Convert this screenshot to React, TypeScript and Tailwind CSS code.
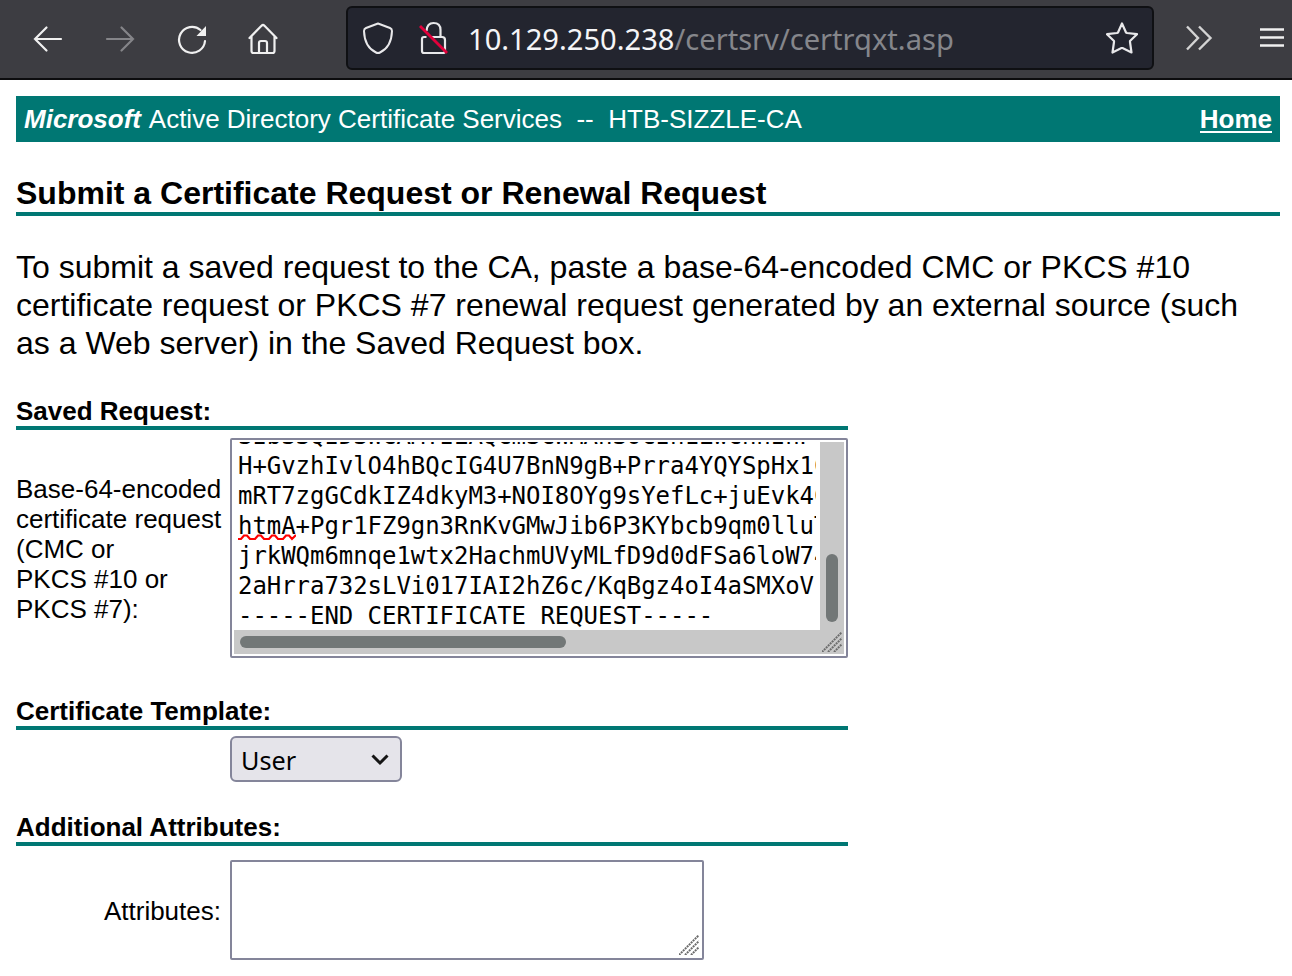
import React from 'react';

const requestLines = [
  'SIbSSQIDSWCAMTIEAQCmSCWMAnSOCIn1LwCnnInP',
  'H+GvzhIvlO4hBQcIG4U7BnN9gB+Prra4YQYSpHx1C',
  'mRT7zgGCdkIZ4dkyM3+NOI8OYg9sYefLc+juEvk4C',
  'htmA+Pgr1FZ9gn3RnKvGMwJib6P3KYbcb9qm0lluT',
  'jrkWQm6mnqe1wtx2HachmUVyMLfD9d0dFSa6loW74',
  '2aHrra732sLVi017IAI2hZ6c/KqBgz4oI4aSMXoV',
  '-----END CERTIFICATE REQUEST-----',
];

function Grip() {
  return (
    <svg width="20" height="20" viewBox="0 0 20 20" fill="none" stroke="#6b6b6b" strokeWidth="2" strokeDasharray="2 0.8">
      <path d="M0 20L20 0M6 20L20 6M12 20L20 12" />
    </svg>
  );
}

function Heading({ children }: { children: React.ReactNode }) {
  return <h2 className="h-[34px] w-[832px] border-b-4 border-[#007773] text-[26px] leading-[30px] font-bold whitespace-nowrap">{children}</h2>;
}

function Toolbar() {
  return (
    <header className="flex h-20 items-start border-b-2 border-[#0c0c0e] bg-[#3d3d42]">
      <div className="flex h-[78px] w-[346px] shrink-0 items-center text-[#f0f0f0]">
        <svg className="ml-8" width="32" height="32" viewBox="0 0 32 32" fill="none" stroke="currentColor" strokeWidth="2.2" strokeLinecap="round">
          <path d="M3 16H29M14.5 4.5L3 16L14.5 27.5" />
        </svg>
        <svg className="ml-10 text-[#858589]" width="32" height="32" viewBox="0 0 32 32" fill="none" stroke="currentColor" strokeWidth="2.2" strokeLinecap="round">
          <path d="M3 16H29M17.5 4.5L29 16L17.5 27.5" />
        </svg>
        <svg className="ml-10" width="32" height="32" viewBox="0 0 32 32" fill="none" stroke="currentColor" strokeWidth="2.2" strokeLinecap="round">
          <path d="M29 18A13 13 0 1 1 24.5 7" />
          <path d="M30 3V13H20.5Z" fill="currentColor" stroke="none" />
        </svg>
        <svg className="ml-[39px]" width="32" height="32" viewBox="0 0 32 32" fill="none" stroke="currentColor" strokeWidth="2.2" strokeLinecap="round" strokeLinejoin="round">
          <path d="M2.5 15L14.5 2.7Q16 1.3 17.5 2.7L29.5 15M4.500 13V28Q4.500 30 6.500 30H25.500Q27.500 30 27.500 28V13M12 30V20Q12 18 14 18H18Q20 18 20 20V30" />
        </svg>
      </div>
      <div className="mt-1.5 flex h-16 w-[808px] shrink-0 items-center rounded-md border-2 border-[#0f1013] bg-[#23252f] text-[#e8e8ea]">
        <svg className="ml-3.5" width="32" height="32" viewBox="0 0 32 32" fill="none" stroke="currentColor" strokeWidth="2" strokeLinejoin="round">
          <path d="M16 1.5L28 6Q30 6.8 30 9Q29.500 25 18 30.500Q16 31.500 14 30.500Q2.500 25 2 9Q2 6.800 4 6Z" />
        </svg>
        <svg className="ml-6" width="32" height="34" viewBox="0 0 32 34" fill="none" stroke="currentColor" strokeWidth="2.200">
          <path d="M8.500 10Q9 2 15.500 2Q22.500 2 22.500 9V16M12 16H24Q27 16 27 19V30Q27 32 25 32H6Q4 32 4 30V18Q4 16 6 16H8.500" />
          <path d="M2 5L29 32" stroke="#e2003b" strokeWidth="2.800" />
        </svg>
        <p className="mt-0.5 ml-[18px] font-['Noto_Sans'] text-[29.1px] leading-10 whitespace-nowrap text-[#f5f5f7]">
          10.129.250.238<span className="text-[#85868b]">/certsrv/certrqxt.asp</span>
        </p>
        <svg className="mr-3.5 ml-auto" width="32" height="32" viewBox="0 0 32 32" fill="none" stroke="currentColor" strokeWidth="2.200" strokeLinejoin="round">
          <path d="M16 1.500L20 10.500L21 11L31 12.200L24 19V20L25.500 30.500L16.500 26H15.500L6.500 30.500L8 20V19L1 12.200L11 11L12 10.500Z" />
        </svg>
      </div>
      <div className="flex h-[78px] items-center text-[#f0f0f0]">
        <svg className="ml-[30px]" width="32" height="32" viewBox="0 0 32 32" fill="none" stroke="#d4d4d4" strokeWidth="2.400">
          <path d="M3 3.500L14 15L3 26.500M15 3.500L26.500 15L15 26.500" />
        </svg>
        <svg className="ml-[44px]" width="24" height="24" viewBox="0 0 24 24" fill="none" stroke="currentColor" strokeWidth="2.400">
          <path d="M0 2.500H24M0 10.500H24M0 18.500H24" />
        </svg>
      </div>
    </header>
  );
}

export default function App() {
  return (
    <div className="h-[976px] w-[1292px] overflow-hidden bg-white font-['Liberation_Sans',sans-serif] text-black">
      <Toolbar />
      <main className="pt-4 pr-3 pl-4">
        <div className="flex h-[46px] items-center justify-between bg-[#007773] px-2 text-[26px] leading-[30px] whitespace-pre text-white">
          <span><b className="mr-0.5"><i>Microsoft</i></b> Active Directory Certificate Services  --  HTB-SIZZLE-CA</span>
          <a className="mt-0.5 border-b-2 border-white leading-[24px] font-bold">Home</a>
        </div>
        <h1 className="mt-[31px] h-[43px] border-b-4 border-[#007773] pt-px text-[32px] leading-[38px] font-bold whitespace-nowrap">
          Submit a Certificate Request or Renewal Request
        </h1>
        <p className="mt-8 text-[32px] leading-[38px] whitespace-nowrap">
          To submit a saved request to the CA, paste a base-64-encoded CMC or PKCS #10<br />
          certificate request or PKCS #7 renewal request generated by an external source (such<br />
          as a Web server) in the Saved Request box.
        </p>
        <section className="mt-[34px]">
          <Heading>Saved Request:</Heading>
          <div className="mt-2 flex h-[220px]">
            <p className="w-[214px] shrink-0 pt-9 text-[26px] leading-[30px] whitespace-nowrap">
              Base-64-encoded<br />certificate request<br />(CMC or<br />PKCS #10 or<br />PKCS #7):
            </p>
            <div className="relative grid h-[220px] w-[618px] grid-cols-[586px_24px] grid-rows-[188px_24px] rounded-xs border-2 border-[#84859a] p-0.5">
              <div className="overflow-hidden">
                <pre className="mt-[-21px] ml-1 w-[578px] overflow-hidden font-['DejaVu_Sans_Mono',monospace] text-[24px] leading-[30px] tracking-[-0.05px]">
                  {requestLines.map((line, i) => (
                    <div key={i} className="h-[30px]">{line}</div>
                  ))}
                </pre>
              </div>
              <div className="bg-[#c8c8c8] px-1.5 pt-28">
                <div className="h-[68px] rounded-full bg-[#727777]" />
              </div>
              <div className="bg-[#c8c8c8] px-1.5 py-1.5">
                <div className="h-3 w-[326px] rounded-full bg-[#727777]" />
              </div>
              <div className="bg-[#c8c8c8] pt-0.5 pl-0.5"><Grip /></div>
              <svg className="absolute top-[93px] left-[6px]" width="58" height="8" viewBox="0 0 58 8" fill="none" stroke="#f00" strokeWidth="2.200">
                <path d="M0 6H3L6 2.500H9L12 6H17L20 2.500H23L26 6H31L34 2.500H37L40 6H45L48 2.500H51L54 6L58 2" />
              </svg>
            </div>
          </div>
        </section>
        <section className="mt-[38px]">
          <Heading>Certificate Template:</Heading>
          <div className="mt-1.5 ml-[214px] flex h-[46px] w-[172px] items-center justify-between rounded-md border-2 border-[#84859a] bg-[#e5e4ea] pt-0.5 pr-[11px] pl-[9px]">
            <span className="font-['Noto_Sans'] text-[25.200px] leading-9">User</span>
            <svg width="18" height="14" viewBox="0 0 18 14" fill="none" stroke="#151515" strokeWidth="3">
              <path d="M1.500 2.500L9 10L16.500 2.500" />
            </svg>
          </div>
        </section>
        <section className="mt-[30px]">
          <Heading>Additional Attributes:</Heading>
          <div className="mt-3.5 flex h-[100px] items-center">
            <label className="w-[214px] pt-0.5 pr-[9px] text-right text-[26px] leading-[30px]">Attributes:</label>
            <div className="flex h-[100px] w-[474px] items-end justify-end rounded-xs border-2 border-[#84859a] p-[3px]"><Grip /></div>
          </div>
        </section>
      </main>
    </div>
  );
}
